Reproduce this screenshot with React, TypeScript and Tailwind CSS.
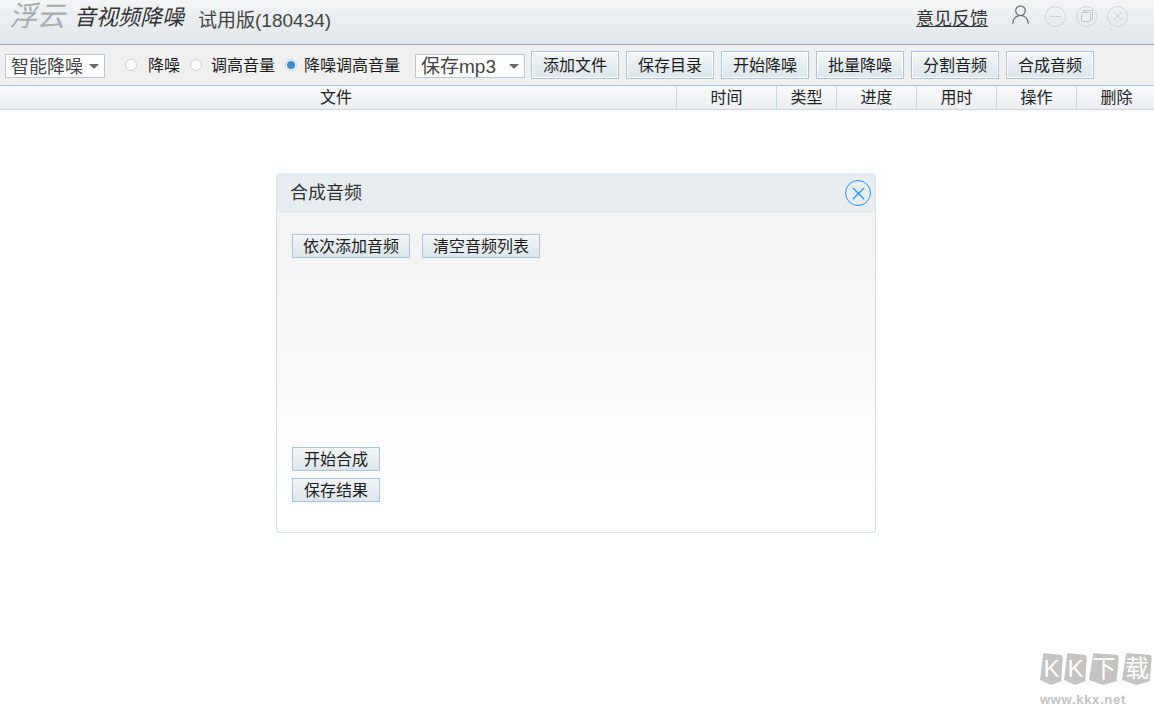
import { X, Minus, UserRound } from "lucide-react";

const cjk = "font-['Liberation_Sans','Noto_Sans_CJK_SC',sans-serif]";

const toolButtons = ["添加文件", "保存目录", "开始降噪", "批量降噪", "分割音频", "合成音频"];

const columns = [
  { label: "时间", width: "w-[100px]" },
  { label: "类型", width: "w-[60px]" },
  { label: "进度", width: "w-[80px]" },
  { label: "用时", width: "w-[80px]" },
  { label: "操作", width: "w-[80px]" },
  { label: "删除", width: "w-[80px]" },
];

function SoftButton({ label, className }: { label: string; className: string }) {
  return (
    <button className={`flex items-center justify-center border border-[#a9c4dc] bg-gradient-to-b from-[#f4f6f7] to-[#dbe6ec] pt-[1px] text-[16px] text-[#1c1c1c] shadow-[inset_0_0_0_1px_#fff] ${className}`}>
      {label}
    </button>
  );
}

function SmallButton({ label, className }: { label: string; className: string }) {
  return (
    <button className={`flex h-6 items-center justify-center border border-[#a9c4dc] bg-gradient-to-b from-[#f4f6f7] to-[#dbe6ec] pt-[1px] text-[16px] text-[#1c1c1c] ${className}`}>
      {label}
    </button>
  );
}

function Radio({ label, checked, textClass }: { label: string; checked?: boolean; textClass: string }) {
  return (
    <label className="flex items-center">
      <span className="flex h-3 w-3 shrink-0 items-center justify-center rounded-full border border-[#d0d0d0] bg-white">
        {checked && <span className="h-2 w-2 rounded-full bg-[#3a8fd0]" />}
      </span>
      <span className={`pt-[1px] text-[16px] text-[#1c1c1c] ${textClass}`}>{label}</span>
    </label>
  );
}

function FakeSelect({ label, className }: { label: string; className: string }) {
  return (
    <div className={`flex h-6 items-center justify-between border border-[#b9c6d3] bg-white pl-[5px] pr-[5px] text-[#444] ${className}`}>
      <span className="pt-[2px]">{label}</span>
      <span className="h-0 w-0 border-x-[5px] border-t-[5px] border-x-transparent border-t-[#666]" />
    </div>
  );
}

function WinButton({ children }: { children: React.ReactNode }) {
  return (
    <span className="flex h-[21px] w-[21px] items-center justify-center rounded-full border border-[#cdd3d8] text-[#bfc5ca]">
      {children}
    </span>
  );
}

function Watermark() {
  const kBlock = "h-[32px] rounded-[6px] bg-[#c4c4c4] text-center [clip-path:polygon(14%_0,100%_6%,92%_88%,48%_100%,0_84%)]";
  return (
    <div className="absolute left-[1040px] top-[653px] flex w-[114px] flex-col">
      <div className="flex text-[24px] font-normal leading-[32px] text-white">
        <span className={`w-[23px] ${kBlock}`}>K</span>
        <span className={`ml-[1px] w-[23px] ${kBlock}`}>K</span>
        <span className={`ml-[2px] w-[30px] ${kBlock}`}>下</span>
        <span className={`ml-[3px] w-[30px] ${kBlock}`}>载</span>
      </div>
      <div className="mt-[9px] text-[13px] font-bold leading-3 tracking-[0.7px] text-[#c2c2c2]">www.kkx.net</div>
    </div>
  );
}

export default function App() {
  return (
    <div className={`relative h-[706px] w-[1154px] overflow-hidden bg-white ${cjk}`}>
      {/* title bar */}
      <div className="flex h-[45px] items-center border-b border-[#a8a8a8] bg-gradient-to-b from-[#f3f5f6] to-[#e0e6eb] pl-[9px]">
        <span className="mb-[10px] text-[28px] italic leading-none text-[#a4adb0]">浮云</span>
        <span className="mb-[8px] ml-[9px] text-[22px] italic leading-none text-[#333]">音视频降噪</span>
        <span className="mb-[4px] ml-[14px] text-[19px] leading-none text-[#444]">试用版(180434)</span>
        <div className="mb-[12px] ml-auto flex items-center pr-[26px]">
          <a className="mt-[6px] text-[18px] text-[#333] underline">意见反馈</a>
          <UserRound size={23} strokeWidth={1.2} className="mb-1 ml-[21px] text-[#666]" />
          <div className="ml-[13px] flex gap-[10px]">
            <WinButton><Minus size={17} strokeWidth={1} /></WinButton>
            <WinButton>
              <svg width="14" height="14" viewBox="0 0 14 14" fill="none" stroke="currentColor">
                <rect x="1.5" y="3.5" width="9" height="9" rx="1" />
                <path d="M3.5 3.5V1.5H12.5V10.5H10.5" />
              </svg>
            </WinButton>
            <WinButton><X size={16} strokeWidth={1.2} /></WinButton>
          </div>
        </div>
      </div>

      {/* toolbar */}
      <div className="flex h-[40px] items-center bg-[#f0f0f0] pl-[5px]">
        <FakeSelect label="智能降噪" className="mt-[2px] w-[100px] text-[18px]" />
        <div className="ml-[20px] flex items-center gap-[10px]">
          <Radio label="降噪" textClass="ml-[11px]" />
          <Radio label="调高音量" textClass="ml-[9px]" />
          <Radio label="降噪调高音量" checked textClass="ml-[7px]" />
        </div>
        <FakeSelect label="保存mp3" className="ml-[15px] mt-[2px] w-[110px] text-[19px]" />
        <div className="ml-[6px] flex gap-[7px]">
          {toolButtons.map((label) => (
            <SoftButton key={label} label={label} className="h-7 w-[88px]" />
          ))}
        </div>
      </div>

      {/* file table header */}
      <div className="flex h-[25px] border-y border-t-[#a9bfd3] border-b-[#cdd6de] bg-gradient-to-b from-[#fafbfc] to-[#eceef1] text-[16px] leading-[24px] text-[#222]">
        <div className="w-[676px] shrink-0 pr-[4px] text-center">文件</div>
        {columns.map((col) => (
          <div key={col.label} className={`shrink-0 border-l border-[#ccd6df] text-center ${col.width}`}>
            {col.label}
          </div>
        ))}
      </div>

      {/* merge dialog */}
      <div className="absolute left-[276px] top-[173px] flex h-[360px] w-[600px] flex-col overflow-hidden rounded-[4px] border border-t-0 border-[#d9e1e8] bg-gradient-to-b from-[#f2f2f2] from-[10%] to-white to-[90%]">
        <div className="flex h-[40px] shrink-0 items-center justify-between bg-[#e8edf1] pl-[13px] pr-[4px]">
          <span className="text-[18px] text-[#333]">合成音频</span>
          <span className="flex h-[26px] w-[26px] items-center justify-center rounded-full border border-[#2196f3] text-[#2196f3]">
            <X size={21} strokeWidth={1.4} />
          </span>
        </div>
        <div className="flex flex-1 flex-col pl-[15px] pt-[21px]">
          <div className="flex gap-3">
            <SmallButton label="依次添加音频" className="w-[118px]" />
            <SmallButton label="清空音频列表" className="w-[118px]" />
          </div>
          <div className="mt-[189px] flex flex-col gap-[7px]">
            <SmallButton label="开始合成" className="w-[88px]" />
            <SmallButton label="保存结果" className="w-[88px]" />
          </div>
        </div>
      </div>

      <Watermark />
    </div>
  );
}
